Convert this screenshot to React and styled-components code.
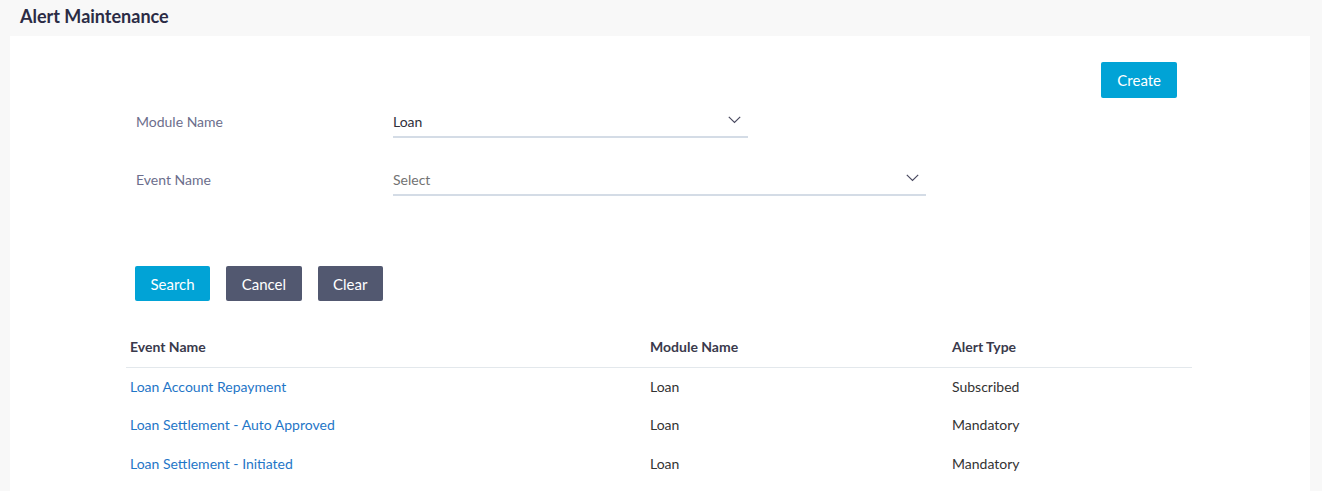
import React from "react";
import styled, { createGlobalStyle } from "styled-components";

const Global = createGlobalStyle`
  html, body { margin: 0; padding: 0; background: #f8f8f8; }
  body { font-family: Lato, "Open Sans", sans-serif; color: #333; }
  * { box-sizing: border-box; }
`;

const Page = styled.div`
  width: 1322px;
  height: 491px;
  overflow: hidden;
  background: #f8f8f8;
`;

const Title = styled.h1`
  margin: 0;
  height: 36px;
  padding-left: 20px;
  display: flex;
  align-items: center;
  padding-bottom: 5px;
  font-size: 18px;
  font-weight: 700;
  color: #2b2b45;
`;

const Card = styled.div`
  margin: 0 12px 0 10px;
  background: #fff;
  padding: 26px 133px 20px 116px;
  min-height: 455px;
`;

const TopBar = styled.div`
  display: flex;
  justify-content: flex-end;
`;

const Button = styled.button`
  height: ${(p) => p.$h || 35}px;
  padding: 0 ${(p) => p.$px || 15.5}px;
  border: none;
  border-radius: 2px;
  background: ${(p) => (p.$variant === "secondary" ? "#525870" : "#01a3d6")};
  color: #fff;
  font-family: Lato, sans-serif;
  font-size: 15px;
  cursor: pointer;
`;

const Form = styled.div`
  padding-left: 10px;
  margin-top: 8px;
  display: flex;
  flex-direction: column;
  gap: 26px;
`;

const Row = styled.div`
  display: flex;
  align-items: center;
`;

const Label = styled.div`
  width: 257px;
  font-size: 14px;
  color: #6c6e8c;
  margin-top: -2px;
`;

const Field = styled.div`
  width: ${(p) => p.$w}px;
  height: 32px;
  border-bottom: 2px solid #d4dce6;
  display: flex;
  align-items: center;
  justify-content: space-between;
  padding-top: 1px;
  font-size: 14px;
  color: ${(p) => (p.$placeholder ? "#727272" : "#2f2f3a")};
`;

const Chevron = styled.svg`
  margin-right: ${(p) => p.$mr || 7}px;
  margin-top: -3px;
`;

const Actions = styled.div`
  display: flex;
  gap: 16px;
  margin-top: 70px;
  padding-left: 9px;
`;

const Table = styled.table`
  margin-top: 26px;
  width: 1066px;
  border-collapse: collapse;
  font-size: 14px;
`;

const Th = styled.th`
  text-align: left;
  font-weight: 700;
  color: #3a3a4c;
  height: 40px;
  padding: 0 4px 1px;
  border-bottom: 1px solid #e3e8ec;
  width: ${(p) => p.$w}px;
  vertical-align: middle;
`;

const Td = styled.td`
  height: ${(p) => p.$h || 38}px;
  padding: 0 4px;
  color: #333;
  vertical-align: middle;
`;

const Link = styled.a`
  color: #1f76c7;
  text-decoration: none;
  cursor: pointer;
`;

const ChevronIcon = ({ mr }) => (
  <Chevron $mr={mr} width="13" height="8" viewBox="0 0 13 8">
    <polyline points="0.8,0.8 6.5,6.5 12.2,0.8" fill="none" stroke="#4a4a60" strokeWidth="1.2" />
  </Chevron>
);

const rows = [
  ["Loan Account Repayment", "Loan", "Subscribed"],
  ["Loan Settlement - Auto Approved", "Loan", "Mandatory"],
  ["Loan Settlement - Initiated", "Loan", "Mandatory"],
];

export default function App() {
  return (
    <Page>
      <Global />
      <Title>Alert Maintenance</Title>
      <Card>
        <TopBar>
          <Button $h={36} $px={16}>Create</Button>
        </TopBar>
        <Form>
          <Row>
            <Label>Module Name</Label>
            <Field $w={355}>
              <span>Loan</span>
              <ChevronIcon mr={7} />
            </Field>
          </Row>
          <Row>
            <Label>Event Name</Label>
            <Field $w={533} $placeholder>
              <span>Select</span>
              <ChevronIcon mr={7} />
            </Field>
          </Row>
        </Form>
        <Actions>
          <Button>Search</Button>
          <Button $variant="secondary">Cancel</Button>
          <Button $variant="secondary">Clear</Button>
        </Actions>
        <Table>
          <thead>
            <tr>
              <Th $w={520}>Event Name</Th>
              <Th $w={302}>Module Name</Th>
              <Th>Alert Type</Th>
            </tr>
          </thead>
          <tbody>
            {rows.map((r, i) => (
              <tr key={r[0]}>
                <Td $h={i === 0 ? 38 : 39}><Link>{r[0]}</Link></Td>
                <Td $h={i === 0 ? 38 : 39}>{r[1]}</Td>
                <Td $h={i === 0 ? 38 : 39}>{r[2]}</Td>
              </tr>
            ))}
          </tbody>
        </Table>
      </Card>
    </Page>
  );
}
